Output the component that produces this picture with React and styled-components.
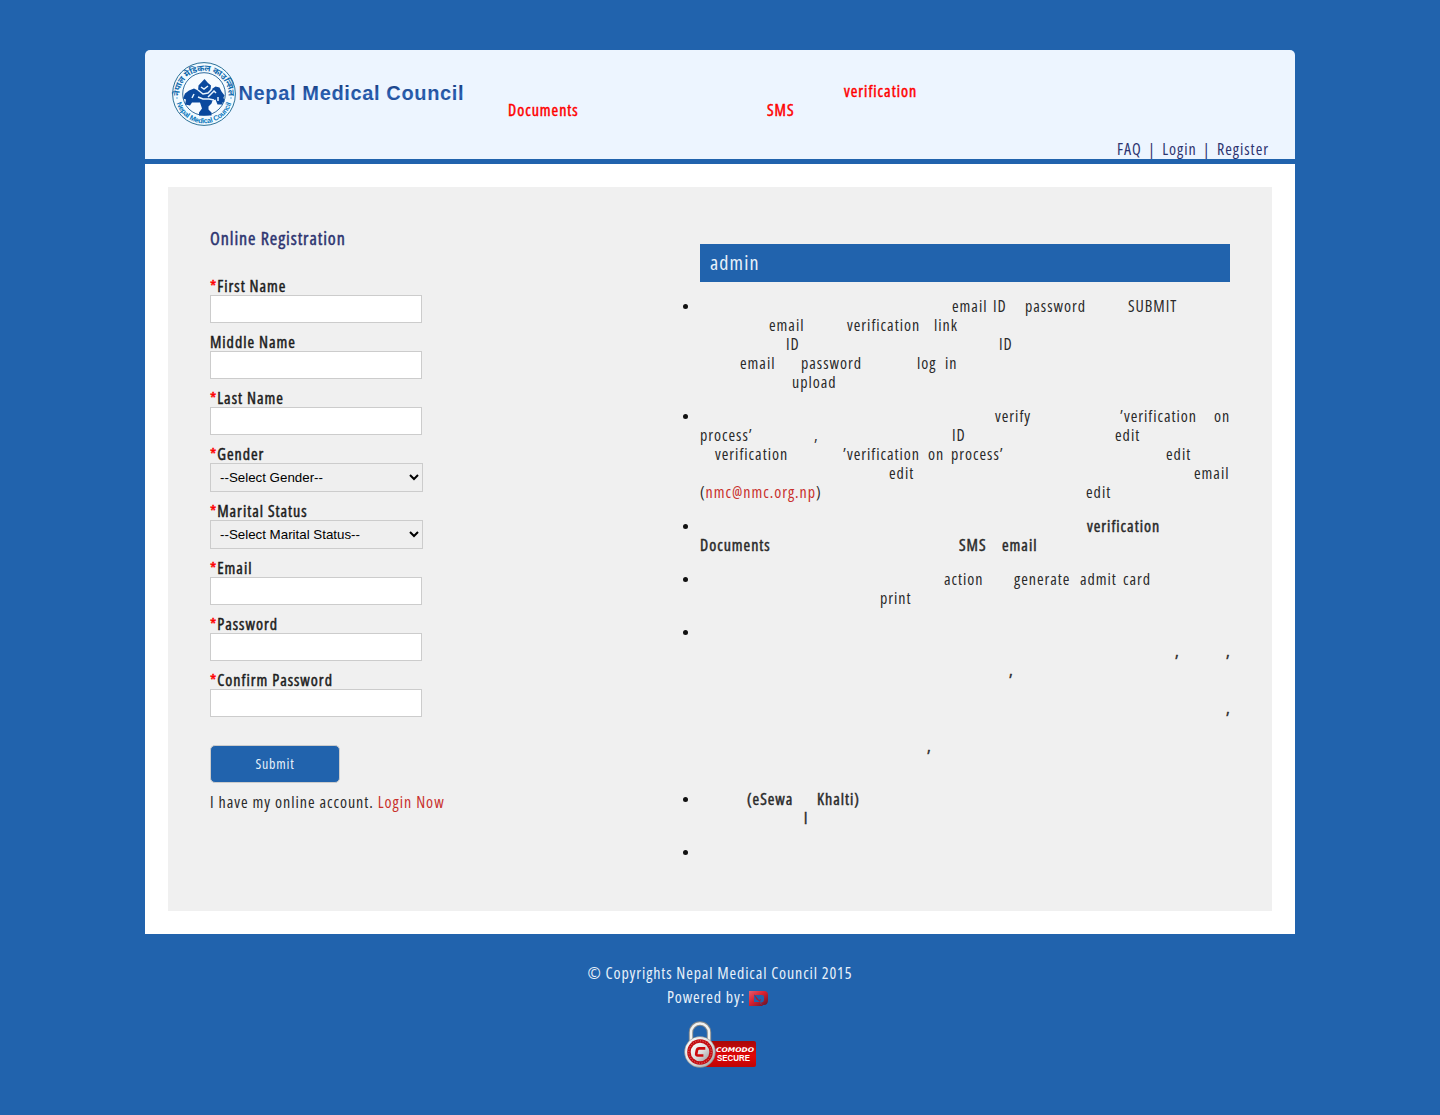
import React from "react";
import styled, { createGlobalStyle, css } from "styled-components";

const BLUE = "#2163ad";

const GlobalStyle = createGlobalStyle`
  * { box-sizing: border-box; }
  body {
    margin: 0;
    background: ${BLUE};
    color: #2a2a2a;
    font: 400 16px/19px "Open Sans", "Noto Sans", sans-serif;
    font-stretch: 75%;
    letter-spacing: 0.97px;
  }
`;

const heavy = css`
  -webkit-text-stroke: 0.45px currentColor;
`;

const Page = styled.div`
  width: 1150px;
  min-height: 1115px;
  margin: 0 auto;
  padding-top: 50px;
`;

const Header = styled.header`
  display: flex;
  height: 109px;
  padding: 10px 26px 0 25px;
  background: #edf5ff;
  border-radius: 5px 5px 0 0;
`;

const Brand = styled.svg`
  display: block;
  width: 300px;
  height: 68px;
  flex: none;
`;

const Notice = styled.div`
  width: 440px;
  margin-left: 38px;
  padding-top: 22px;
  color: #f00;
`;

const Nav = styled.nav`
  display: flex;
  align-self: flex-end;
  gap: 6.5px;
  margin-left: auto;
  color: #2d3470;
`;

const NavLink = styled.a`
  color: inherit;
`;

const Content = styled.main`
  margin-top: 5px;
  padding: 23px;
  background: #fff;
`;

const Panel = styled.div`
  display: flex;
  justify-content: space-between;
  height: 724px;
  padding: 0 42px;
  background: #f0f0f0;
`;

const Form = styled.form`
  display: flex;
  flex-direction: column;
  align-items: flex-start;
  width: 300px;
  padding-top: 42px;
`;

const Title = styled.h1`
  margin: 0 0 28px;
  color: #2d3470;
  font-size: 18px;
  font-weight: 400;
  line-height: 19px;
  letter-spacing: 0.92px;
  ${heavy}
`;

const Field = styled.label`
  display: flex;
  flex-direction: column;
  margin-bottom: 9px;
`;

const Label = styled.span`
  height: 19px;
  color: #1c1c1c;
  line-height: 21px;
  ${heavy}
`;

const Star = styled.span`
  color: #f00;
`;

const Input = styled.input`
  width: 212px;
  height: 28px;
  padding: 0 8px;
  border: 1px solid #ccc;
  background: #fff;
`;

const Select = styled.select`
  width: 213px;
  height: 29px;
  padding: 0 5px;
  border: 1px solid #ccc;
  border-radius: 0;
  background: #efefef;
  color: #000;
  font: 13.333px "Liberation Sans", Arial, sans-serif;
  letter-spacing: 0;
`;

const Submit = styled.button`
  width: 130px;
  height: 38px;
  margin: 19px 0 10px;
  padding-bottom: 3px;
  border: 1px solid #ccc;
  border-radius: 5px;
  background: ${BLUE};
  color: #e8f1fa;
  font: inherit;
  font-size: 14px;
  font-stretch: 75%;
  letter-spacing: 0.8px;
`;

const RedLink = styled.a`
  color: #c9302c;
`;

const Guide = styled.section`
  width: 530px;
  padding-top: 57px;
`;

const GuideTitle = styled.h2`
  height: 38px;
  margin: 0 0 15px;
  padding-left: 10px;
  background: ${BLUE};
  color: #e8f1fa;
  font-size: 20px;
  font-weight: 400;
  line-height: 37px;
  letter-spacing: 1.1px;
`;

const List = styled.ul`
  margin: 0;
  padding: 0;
`;

const Item = styled.li`
  margin-bottom: 15px;

  &::marker {
    color: #111;
    font-size: 14px;
  }
`;

const Row = styled.div`
  display: flex;
  height: 19px;
  padding-left: ${(p) => p.$indent}px;
  ${(p) => p.$heavy && heavy}
`;

const Word = styled.span`
  flex: none;
  width: ${(p) => (p.$width ? `${p.$width}px` : "auto")};
  white-space: nowrap;
`;

const Footer = styled.footer`
  display: flex;
  flex-direction: column;
  align-items: center;
  padding-top: 27px;
  color: #e8f1fa;
  line-height: 24px;
  letter-spacing: 0.87px;
`;

const Powered = styled.div`
  display: flex;
  align-items: center;
  gap: 4px;
  margin-right: 4px;
`;

const VendorMark = styled.svg`
  display: block;
  width: 20px;
  height: 16px;
  margin-top: 3px;
`;

const Secure = styled.svg`
  display: block;
  width: 74px;
  height: 50px;
  margin-top: 11px;
`;

function Line({ words, bold }) {
  const cells = words.length ? words : [[0, "\u00a0"]];
  return (
    <Row $indent={cells[0][0]} $heavy={bold}>
      {cells.map(([x, text], i) => (
        <Word key={x} $width={cells[i + 1] ? cells[i + 1][0] - x : 0}>
          {text}
        </Word>
      ))}
    </Row>
  );
}

const mail = (
  <>
    (<RedLink>nmc@nmc.org.np</RedLink>)
  </>
);

const guide = [
  {
    lines: [
      [[252, "email"], [293, "ID"], [325, "password"], [428, "SUBMIT"]],
      [[69, "email"], [147, "verification"], [234, "link"]],
      [[86, "ID"], [299, "ID"]],
      [[40, "email"], [101, "password"], [217, "log"], [245, "in"]],
      [[92, "upload"]],
    ],
  },
  {
    lines: [
      [[295, "verify"], [420, "’verification"], [514, "on"]],
      [[0, "process’"], [114, ","], [252, "ID"], [415, "edit"]],
      [[15, "verification"], [143, "’verification"], [228, "on"], [251, "process’"], [466, "edit"]],
      [[189, "edit"], [494, "email"]],
      [[0, mail], [386, "edit"]],
    ],
  },
  {
    bold: true,
    lines: [
      [[387, "verification"]],
      [[0, "Documents"], [259, "SMS"], [302, "email"]],
    ],
  },
  {
    lines: [
      [[244, "action"], [314, "generate"], [380, "admit"], [423, "card"]],
      [[180, "print"]],
    ],
  },
  {
    bold: true,
    lines: [[], [[475, ","], [526, ","]], [[309, ","]], [], [[526, ","]], [], [[227, ","]], []],
  },
  {
    bold: true,
    lines: [[[47, "(eSewa"], [117, "Khalti)"]], [[104, "l"]]],
  },
  { lines: [[]] },
];

const fields = [
  { label: "First Name", required: true },
  { label: "Middle Name" },
  { label: "Last Name", required: true },
  { label: "Gender", required: true, option: "--Select Gender--" },
  { label: "Marital Status", required: true, option: "--Select Marital Status--" },
  { label: "Email", required: true },
  { label: "Password", required: true, type: "password" },
  { label: "Confirm Password", required: true, type: "password" },
];

function Logo() {
  return (
    <Brand viewBox="0 0 300 68">
      <defs>
        <path id="sealTop" d="M10.5 42.5A24.5 24.5 0 1 1 57.5 42.5" />
        <path id="sealBottom" d="M5.5 38A28.7 28.7 0 0 0 62.5 38" />
        <linearGradient id="brandInk" x1="0" y1="0" x2="0" y2="1">
          <stop offset="0.2" stopColor="#1c4388" />
          <stop offset="0.6" stopColor="#2b62b5" />
          <stop offset="1" stopColor="#1c4388" />
        </linearGradient>
      </defs>
      <circle cx="34" cy="34" r="31.4" fill="#f2faff" stroke="#2b7198" />
      <circle cx="34" cy="34" r="21.3" fill="#f6fbff" stroke="#1c5c93" strokeWidth="0.9" />
      <text fill="#126bae" fontFamily="Noto Sans, sans-serif" fontSize="8.5" fontWeight="700" letterSpacing="0">
        <textPath href="#sealTop" startOffset="50%" textAnchor="middle" textLength="78">
          नेपाल मेडिकल काउन्सिल
        </textPath>
      </text>
      <text fill="#0877bd" fontFamily="Liberation Sans, Arial, sans-serif" fontSize="7.2" fontWeight="700" letterSpacing="0">
        <textPath href="#sealBottom" startOffset="50%" textAnchor="middle" textLength="72">
          Nepal Medical Council
        </textPath>
      </text>
      <g fill="#0a499e">
        <path d="M34.5 19l3.5 4 3 2.5-.5 4.5 5-3.5 4 1 2 4 3 4-1 2 1 4-2 1v2h-5l-2-5-3 1-1 3-3 3v3l3 3v3H29v-3l3-4-2-6h-8l-2 3-5-1 1-5-3-1 2-5 4-3 5-2 4 2 .5-5z" />
      </g>
      <path d="M28 30l5 4 5-1 4-4M31 27l3 2 4-3M38 37l6-6 2 2M28 37l5 2h6l5 1M24 34l-2 4M48 37v4" fill="none" stroke="#e8f5ff" strokeWidth="1.5" />
      <circle cx="7" cy="38" r="0.8" fill="#4aa4dc" />
      <circle cx="61" cy="38" r="0.8" fill="#4aa4dc" />
      <text x="68.5" y="39.7" fill="url(#brandInk)" fontFamily="Liberation Sans, Arial, sans-serif" fontSize="20" fontWeight="700" textLength="225" letterSpacing="0">
        Nepal Medical Council
      </text>
    </Brand>
  );
}

function Padlock() {
  return (
    <Secure viewBox="0 0 74 50">
      <defs>
        <linearGradient id="plate" x1="0" y1="0" x2="0" y2="1">
          <stop offset="0" stopColor="#a80808" />
          <stop offset="0.55" stopColor="#e00707" />
          <stop offset="1" stopColor="#c00505" />
        </linearGradient>
        <linearGradient id="steel" x1="0" y1="0" x2="1" y2="1">
          <stop offset="0" stopColor="#fff" />
          <stop offset="0.55" stopColor="#dcdddd" />
          <stop offset="1" stopColor="#999" />
        </linearGradient>
      </defs>
      <rect x="18" y="21" width="55" height="26" rx="2" fill="url(#plate)" />
      <path d="M8 22V12.5a9 9 0 0 1 18 0V22" fill="none" stroke="#85898b" strokeWidth="4.4" />
      <path d="M8 22V12.5a9 9 0 0 1 18 0V22" fill="none" stroke="#f1f1ef" strokeWidth="2.5" />
      <circle cx="17" cy="32" r="15.5" fill="url(#steel)" stroke="#777" strokeWidth="0.5" />
      <circle cx="17" cy="32" r="12.8" fill="#c20d12" />
      <circle cx="17" cy="32" r="11.2" fill="none" stroke="#ed8d8d" strokeWidth="0.8" strokeDasharray="1 1.5" />
      <circle cx="17" cy="32" r="9.3" fill="url(#steel)" />
      <path d="M22.3 28.3h-6q-2 0-2.4 2l-.6 3.2q-.4 2 1.5 2h5.6" fill="none" stroke="#cd080c" strokeWidth="2.7" />
      <text x="33" y="32" fill="#fff" fontFamily="DejaVu Sans, sans-serif" fontSize="6.5" fontStyle="italic" fontWeight="700" textLength="38" lengthAdjust="spacingAndGlyphs" letterSpacing="0">
        COMODO
      </text>
      <text x="34" y="41.3" fill="#fff" fontFamily="Liberation Sans, Arial, sans-serif" fontSize="9.2" fontWeight="700" textLength="33" lengthAdjust="spacingAndGlyphs" letterSpacing="0">
        SECURE
      </text>
    </Secure>
  );
}

function Vendor() {
  return (
    <VendorMark viewBox="0 0 20 16">
      <defs>
        <linearGradient id="vendorRed" x1="0" y1="0" x2="1" y2="1">
          <stop offset="0" stopColor="#e45c70" />
          <stop offset="0.45" stopColor="#d9202f" />
          <stop offset="1" stopColor="#5c1229" />
        </linearGradient>
      </defs>
      <path fillRule="evenodd" d="M0 0h15q4 0 4 4v5q0 5-4 5h-2l-2-2 3-1q1-1 1-3V6q0-2-2-2H5v7h6l3 4H0z" fill="url(#vendorRed)" />
      <path d="M5 3l5 6 2-1-1 3-4-3z" fill="#a91d32" />
    </VendorMark>
  );
}

export default function App() {
  return (
    <Page>
      <GlobalStyle />
      <Header>
        <Logo />
        <Notice>
          <Line bold words={[[336, "verification"]]} />
          <Line bold words={[[0, "Documents"], [259, "SMS"]]} />
        </Notice>
        <Nav>
          <NavLink>FAQ</NavLink>
          <span>|</span>
          <NavLink>Login</NavLink>
          <span>|</span>
          <NavLink>Register</NavLink>
        </Nav>
      </Header>
      <Content>
        <Panel>
          <Form>
            <Title>Online Registration</Title>
            {fields.map((f) => (
              <Field key={f.label}>
                <Label>
                  {f.required && <Star>*</Star>}
                  {f.label}
                </Label>
                {f.option ? (
                  <Select>
                    <option>{f.option}</option>
                  </Select>
                ) : (
                  <Input type={f.type || "text"} />
                )}
              </Field>
            ))}
            <Submit type="button">Submit</Submit>
            <div>
              I have my online account. <RedLink>Login Now</RedLink>
            </div>
          </Form>
          <Guide>
            <GuideTitle>admin</GuideTitle>
            <List>
              {guide.map((item, i) => (
                <Item key={i}>
                  {item.lines.map((words, j) => (
                    <Line key={j} words={words} bold={item.bold} />
                  ))}
                </Item>
              ))}
            </List>
          </Guide>
        </Panel>
      </Content>
      <Footer>
        <div>© Copyrights Nepal Medical Council 2015</div>
        <Powered>
          Powered by: <Vendor />
        </Powered>
        <Padlock />
      </Footer>
    </Page>
  );
}
